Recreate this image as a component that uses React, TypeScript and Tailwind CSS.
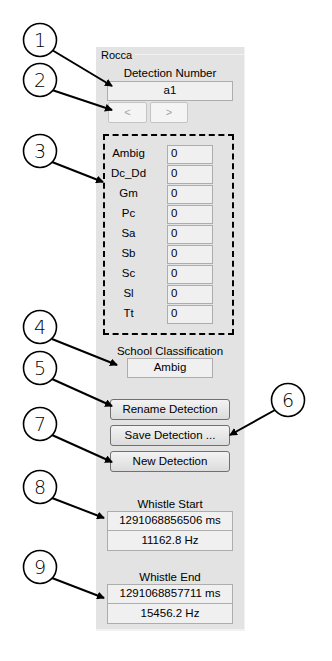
import React from "react";

const font = { fontFamily: '"Liberation Sans", Arial, sans-serif' };

// callout circles and their arrows (drawn over the page)
const callouts = [
  { n: "1", cx: 40, cy: 40, x1: 52, y1: 50, x2: 112, y2: 86 },
  { n: "2", cx: 40, cy: 80, x1: 52, y1: 90, x2: 112, y2: 110 },
  { n: "3", cx: 40, cy: 151, x1: 52, y1: 162, x2: 103, y2: 182 },
  { n: "4", cx: 40, cy: 327, x1: 52, y1: 339, x2: 117, y2: 365 },
  { n: "5", cx: 40, cy: 368, x1: 52, y1: 379, x2: 112, y2: 406 },
  { n: "6", cx: 288, cy: 400, x1: 275, y1: 410, x2: 230, y2: 435 },
  { n: "7", cx: 40, cy: 424, x1: 52, y1: 435, x2: 112, y2: 462 },
  { n: "8", cx: 40, cy: 487, x1: 52, y1: 498, x2: 104, y2: 518 },
  { n: "9", cx: 40, cy: 567, x1: 52, y1: 578, x2: 104, y2: 598 },
];

const species = ["Ambig", "Dc_Dd", "Gm", "Pc", "Sa", "Sb", "Sc", "Sl", "Tt"];

const Box: React.FC<{ children: React.ReactNode; className?: string }> = ({
  children,
  className = "",
}) => (
  <div
    className={`flex items-center justify-center border border-[#adadad] bg-[#f0f0f0] text-[11.5px] text-black ${className}`}
  >
    {children}
  </div>
);

const Button: React.FC<{ label: string }> = ({ label }) => (
  <div className="ml-[14px] flex h-[21px] w-[120px] items-center justify-center rounded-[3px] border border-[#707070] bg-gradient-to-b from-[#f3f3f3] to-[#dcdcdc] text-[11.5px] text-black">
    {label}
  </div>
);

const App: React.FC = () => {
  return (
    <div className="relative h-[661px] w-[332px] overflow-hidden bg-white" style={font}>
      <div className="pl-[96px] pt-[47px]">
        {/* Rocca panel */}
        <div className="flex w-[149px] flex-col border-r border-[#f2f2f2] bg-[#e3e3e3] pb-[5px]">
          <div className="flex h-[16px] items-center">
            <span className="pl-[5px] pr-[3px] text-[11px] leading-[16px] text-black">Rocca</span>
            <div className="mt-[-1px] h-px flex-1 bg-[#f2f2f2]" />
          </div>
          <div className="mt-[3px] text-center text-[11.5px] leading-[14px] text-black">
            Detection Number
          </div>
          <Box className="ml-[11px] mt-[1px] h-[20px] w-[126px]">a1</Box>
          <div className="ml-[12px] mt-[1px] flex gap-[3px]">
            <div className="flex h-[21px] w-[39px] items-center justify-center rounded-[2px] border border-[#c4c4c4] bg-[#f4f4f4] text-[11px] text-[#a3a3a3]">
              &lt;
            </div>
            <div className="flex h-[21px] w-[38px] items-center justify-center rounded-[2px] border border-[#c4c4c4] bg-[#f4f4f4] text-[11px] text-[#a3a3a3]">
              &gt;
            </div>
          </div>

          {/* species counts */}
          <div className="ml-[7px] mt-[11px] flex h-[201px] w-[131px] flex-col border-2 border-dashed border-black pt-[8px]">
            {species.map((s) => (
              <div key={s} className="flex h-[20px] items-center">
                <div className="w-[46px] pl-[1px] text-center text-[11.5px] text-black">{s}</div>
                <div className="ml-[16px] flex h-[19px] w-[46px] items-center border border-[#adadad] bg-[#f0f0f0] pl-[3px] text-[11.5px] text-black">
                  0
                </div>
              </div>
            ))}
          </div>

          <div className="mt-[9px] text-center text-[11.5px] leading-[14px] text-black">
            School Classification
          </div>
          <Box className="ml-[31px] h-[20px] w-[86px]">Ambig</Box>

          <div className="mt-[21px] flex flex-col gap-[5px]">
            <Button label="Rename Detection" />
            <Button label="Save Detection ..." />
            <Button label="New Detection" />
          </div>

          <div className="mt-[25px] text-center text-[11.5px] leading-[14px] text-black">
            Whistle Start
          </div>
          <Box className="ml-[11px] h-[20px] w-[126px]">1291068856506 ms</Box>
          <Box className="ml-[11px] h-[20px] w-[126px] border-t-0">11162.8 Hz</Box>

          <div className="mt-[19px] text-center text-[11.5px] leading-[14px] text-black">
            Whistle End
          </div>
          <Box className="ml-[11px] h-[20px] w-[126px]">1291068857711 ms</Box>
          <Box className="ml-[11px] h-[20px] w-[126px] border-t-0">15456.2 Hz</Box>
        </div>
        <div className="h-[2px] w-[149px] bg-[#f1f1f1]" />
      </div>

      {/* callouts */}
      <svg className="absolute left-0 top-0" width={332} height={661} viewBox="0 0 332 661">
        <defs>
          <marker id="head" markerWidth="8" markerHeight="8" refX="7" refY="4" orient="auto" markerUnits="userSpaceOnUse">
            <path d="M0,0 L8,4 L0,8 z" fill="#000" />
          </marker>
        </defs>
        {callouts.map((c) => (
          <g key={c.n}>
            <line x1={c.x1} y1={c.y1} x2={c.x2} y2={c.y2} stroke="#000" strokeWidth={2} markerEnd="url(#head)" />
            <circle cx={c.cx} cy={c.cy} r={16.5} fill="#fff" stroke="#000" strokeWidth={1.6} />
            <text
              x={c.cx}
              y={c.cy + 7}
              textAnchor="middle"
              fontSize={19}
              fontFamily='"DejaVu Sans", Verdana, sans-serif'
              fontWeight={300}
              fill="#000"
            >
              {c.n}
            </text>
          </g>
        ))}
      </svg>
    </div>
  );
};

export default App;
